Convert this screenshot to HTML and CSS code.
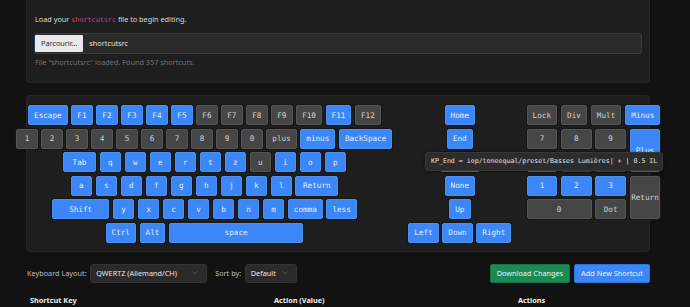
FILE: index.html
```html
<!DOCTYPE html>
<html lang="en">
<head>
    <meta charset="UTF-8">
    <meta name="viewport" content="width=device-width, initial-scale=1.0">
    <title>Shortcut Editor</title>
    <link rel="stylesheet" href="styles.css">
</head>
<body>
    <div class="page">
        <section class="panel loader">
            <p class="intro">Load your <code>shortcutsrc</code> file to begin editing.</p>
            <div class="file-input">
                <span class="file-btn">Parcourir…</span>
                <span class="file-name">shortcutsrc</span>
            </div>
            <p class="status">File "shortcutsrc" loaded. Found 357 shortcuts.</p>
        </section>

        <section class="panel keyboard">
            <div class="kb-main">
                <div class="kb-row">
                    <span class="key on">Escape</span>
                    <span class="key on">F1</span>
                    <span class="key on">F2</span>
                    <span class="key on">F3</span>
                    <span class="key on">F4</span>
                    <span class="key on">F5</span>
                    <span class="key">F6</span>
                    <span class="key">F7</span>
                    <span class="key">F8</span>
                    <span class="key">F9</span>
                    <span class="key">F10</span>
                    <span class="key on">F11</span>
                    <span class="key">F12</span>
                </div>
                <div class="kb-row">
                    <span class="key">1</span>
                    <span class="key">2</span>
                    <span class="key">3</span>
                    <span class="key">4</span>
                    <span class="key">5</span>
                    <span class="key">6</span>
                    <span class="key">7</span>
                    <span class="key">8</span>
                    <span class="key">9</span>
                    <span class="key">0</span>
                    <span class="key">plus</span>
                    <span class="key on">minus</span>
                    <span class="key on">BackSpace</span>
                </div>
                <div class="kb-row">
                    <span class="key on tab">Tab</span>
                    <span class="key on">q</span>
                    <span class="key on">w</span>
                    <span class="key on">e</span>
                    <span class="key on">r</span>
                    <span class="key on">t</span>
                    <span class="key on">z</span>
                    <span class="key">u</span>
                    <span class="key on">i</span>
                    <span class="key on">o</span>
                    <span class="key on">p</span>
                </div>
                <div class="kb-row">
                    <span class="key on">a</span>
                    <span class="key on">s</span>
                    <span class="key on">d</span>
                    <span class="key on">f</span>
                    <span class="key on">g</span>
                    <span class="key on">h</span>
                    <span class="key on">j</span>
                    <span class="key on">k</span>
                    <span class="key on">l</span>
                    <span class="key on return">Return</span>
                </div>
                <div class="kb-row">
                    <span class="key on shift">Shift</span>
                    <span class="key on">y</span>
                    <span class="key on">x</span>
                    <span class="key on">c</span>
                    <span class="key on">v</span>
                    <span class="key on">b</span>
                    <span class="key on">n</span>
                    <span class="key on">m</span>
                    <span class="key on">comma</span>
                    <span class="key on">less</span>
                </div>
                <div class="kb-row">
                    <span class="key on">Ctrl</span>
                    <span class="key on">Alt</span>
                    <span class="key on space">space</span>
                </div>
            </div>

            <div class="kb-nav">
                <div class="kb-row"><span class="key on">Home</span></div>
                <div class="kb-row"><span class="key on">End</span></div>
                <div class="kb-row"><span class="key on">Delete</span></div>
                <div class="kb-row"><span class="key on">None</span></div>
                <div class="kb-row"><span class="key on">Up</span></div>
                <div class="kb-row">
                    <span class="key on">Left</span>
                    <span class="key on">Down</span>
                    <span class="key on">Right</span>
                </div>
            </div>

            <div class="kb-pad">
                <div class="pad-top">
                    <span class="key">Lock</span>
                    <span class="key">Div</span>
                    <span class="key">Mult</span>
                    <span class="key on">Minus</span>
                </div>
                <div class="pad-grid">
                    <span class="key">7</span>
                    <span class="key">8</span>
                    <span class="key">9</span>
                    <span class="key on tall">Plus</span>
                    <span class="key on">4</span>
                    <span class="key">5</span>
                    <span class="key">6</span>
                    <span class="key on">1</span>
                    <span class="key on">2</span>
                    <span class="key on">3</span>
                    <span class="key tall">Return</span>
                    <span class="key wide">0</span>
                    <span class="key">Dot</span>
                </div>
            </div>

            <div class="tooltip">KP_End = iop/toneequal/preset/Basses Lumières| + | 0.5 IL</div>
        </section>

        <div class="toolbar">
            <label class="field-label">Keyboard Layout:</label>
            <div class="select layout-select">
                <span>QWERTZ (Allemand/CH)</span>
                <svg width="6" height="4" viewBox="0 0 6 4"><polyline points="0.5,0.5 3,3 5.5,0.5" fill="none" stroke="#5c5c5c" stroke-width="0.9"/></svg>
            </div>
            <label class="field-label sort-label">Sort by:</label>
            <div class="select sort-select">
                <span>Default</span>
                <svg width="6" height="4" viewBox="0 0 6 4"><polyline points="0.5,0.5 3,3 5.5,0.5" fill="none" stroke="#5c5c5c" stroke-width="0.9"/></svg>
            </div>
            <button type="button" class="btn btn-green">Download Changes</button>
            <button type="button" class="btn btn-blue">Add New Shortcut</button>
        </div>

        <div class="table-head">
            <div>Shortcut Key</div>
            <div>Action (Value)</div>
            <div>Actions</div>
        </div>
    </div>
</body>
</html>
```

FILE: styles.css
```css
* {
    box-sizing: border-box;
}

body {
    margin: 0;
    background: #121212;
    color: #dcdcdc;
    font-family: "Noto Sans", sans-serif;
    font-size: 7.3px;
    overflow: hidden;
}

.page {
    width: 624px;
    margin-left: 26px;
}

.panel {
    background: #1e1e1e;
    border: 1px solid #262626;
    border-radius: 4px;
}

/* file loader */
.loader {
    margin-top: -10px;
    padding: 21px 7px 13px;
}

.intro {
    margin: 0 0 6px;
    line-height: 14px;
    padding-left: 1px;
}

.intro code {
    font-family: "DejaVu Sans Mono", monospace;
    font-size: 6.75px;
    color: #d0457f;
}

.file-input {
    display: flex;
    align-items: center;
    height: 20.5px;
    background: #2a2a2a;
    border: 1.5px solid #1d3f75;
    border-radius: 3px;
    padding-left: 0;
}

.file-btn {
    display: flex;
    align-items: center;
    height: 17.5px;
    padding: 0 6px;
    background: #e9e9e9;
    color: #2a2a2a;
    border-radius: 1px;
}

.file-name {
    margin-left: 6px;
    color: #e4e4e4;
}

.status {
    margin: 1.5px 0 0;
    line-height: 14px;
    padding-left: 1px;
    color: #727272;
}

/* keyboard */
.keyboard {
    position: relative;
    display: flex;
    margin-top: 12px;
    padding: 9px 10px 8.5px;
}

.kb-main, .kb-nav {
    display: flex;
    flex-direction: column;
    gap: 3.5px;
    flex-shrink: 0;
}

.kb-main {
    width: 334.8px;
}

.kb-nav {
    margin-left: 36.5px;
}

.kb-row {
    display: flex;
    justify-content: center;
    gap: 3.6px;
}

.key {
    display: flex;
    align-items: center;
    justify-content: center;
    flex-shrink: 0;
    height: 20px;
    min-width: 21.4px;
    padding: 0 5px;
    font-family: "DejaVu Sans Mono", monospace;
    font-size: 7.65px;
    color: #d2d2d2;
    background: #464646;
    border: 1px solid #555;
    border-radius: 2px;
    box-shadow: 0 0 0 1px #161616;
}

.key.on {
    background: #3b87f7;
    border-color: #4a90f5;
    color: #e3edff;
}

.key.tab { width: 33.3px; }
.key.return { width: 42.7px; }
.key.shift { width: 57.3px; }
.key.space { width: 134.3px; }

.kb-pad {
    display: flex;
    flex-direction: column;
    gap: 3.5px;
    width: 133.7px;
    margin-left: 15.3px;
    flex-shrink: 0;
}

.pad-top {
    display: flex;
    justify-content: space-between;
}

.pad-grid {
    display: grid;
    grid-template-columns: repeat(4, 1fr);
    grid-auto-rows: 20px;
    gap: 3.5px 3.6px;
}

.pad-grid .key {
    min-width: 0;
    height: auto;
}

.key.tall { grid-row: span 2; }
.key.wide { grid-column: span 2; }

.tooltip {
    position: absolute;
    left: 398px;
    top: 56px;
    height: 18.5px;
    display: flex;
    align-items: center;
    padding: 0 5px;
    white-space: nowrap;
    font-family: "DejaVu Sans Mono", monospace;
    font-size: 6.6px;
    color: #e2e2e2;
    background: #2c2c2c;
    border: 1px solid #383838;
    border-radius: 3px;
    box-shadow: 0 1px 3px rgba(0, 0, 0, 0.5);
}

/* toolbar */
.toolbar {
    display: flex;
    align-items: center;
    margin-top: 12.3px;
    height: 18.4px;
}

.field-label {
    color: #bdbdbd;
    padding-left: 1px;
}

.select {
    display: flex;
    align-items: center;
    justify-content: space-between;
    height: 18.4px;
    padding: 0 8px 0 5px;
    margin-left: 3.6px;
    background: #2a2a2a;
    border: 1px solid #333;
    border-radius: 3px;
    color: #e6e6e6;
}

.layout-select { width: 116.4px; }
.sort-select { width: 52px; }

.sort-label {
    margin-left: 7.6px;
}

.btn {
    height: 18.4px;
    padding: 0 6px;
    font-family: "Noto Sans", sans-serif;
    font-size: 7.3px;
    color: #f0f0f0;
    border-radius: 2px;
    cursor: pointer;
}

.btn-green {
    margin-left: auto;
    background: #1b8a56;
    border: 1px solid #16703f;
}

.btn-blue {
    margin-left: 4px;
    background: #3b87f7;
    border: 1px solid #2f72d6;
}

/* table */
.table-head {
    display: grid;
    grid-template-columns: 244px 244px 1fr;
    margin-top: 10.5px;
    line-height: 14px;
    font-weight: 700;
    color: #f0f0f0;
}

.table-head div {
    padding-left: 4px;
}
```
